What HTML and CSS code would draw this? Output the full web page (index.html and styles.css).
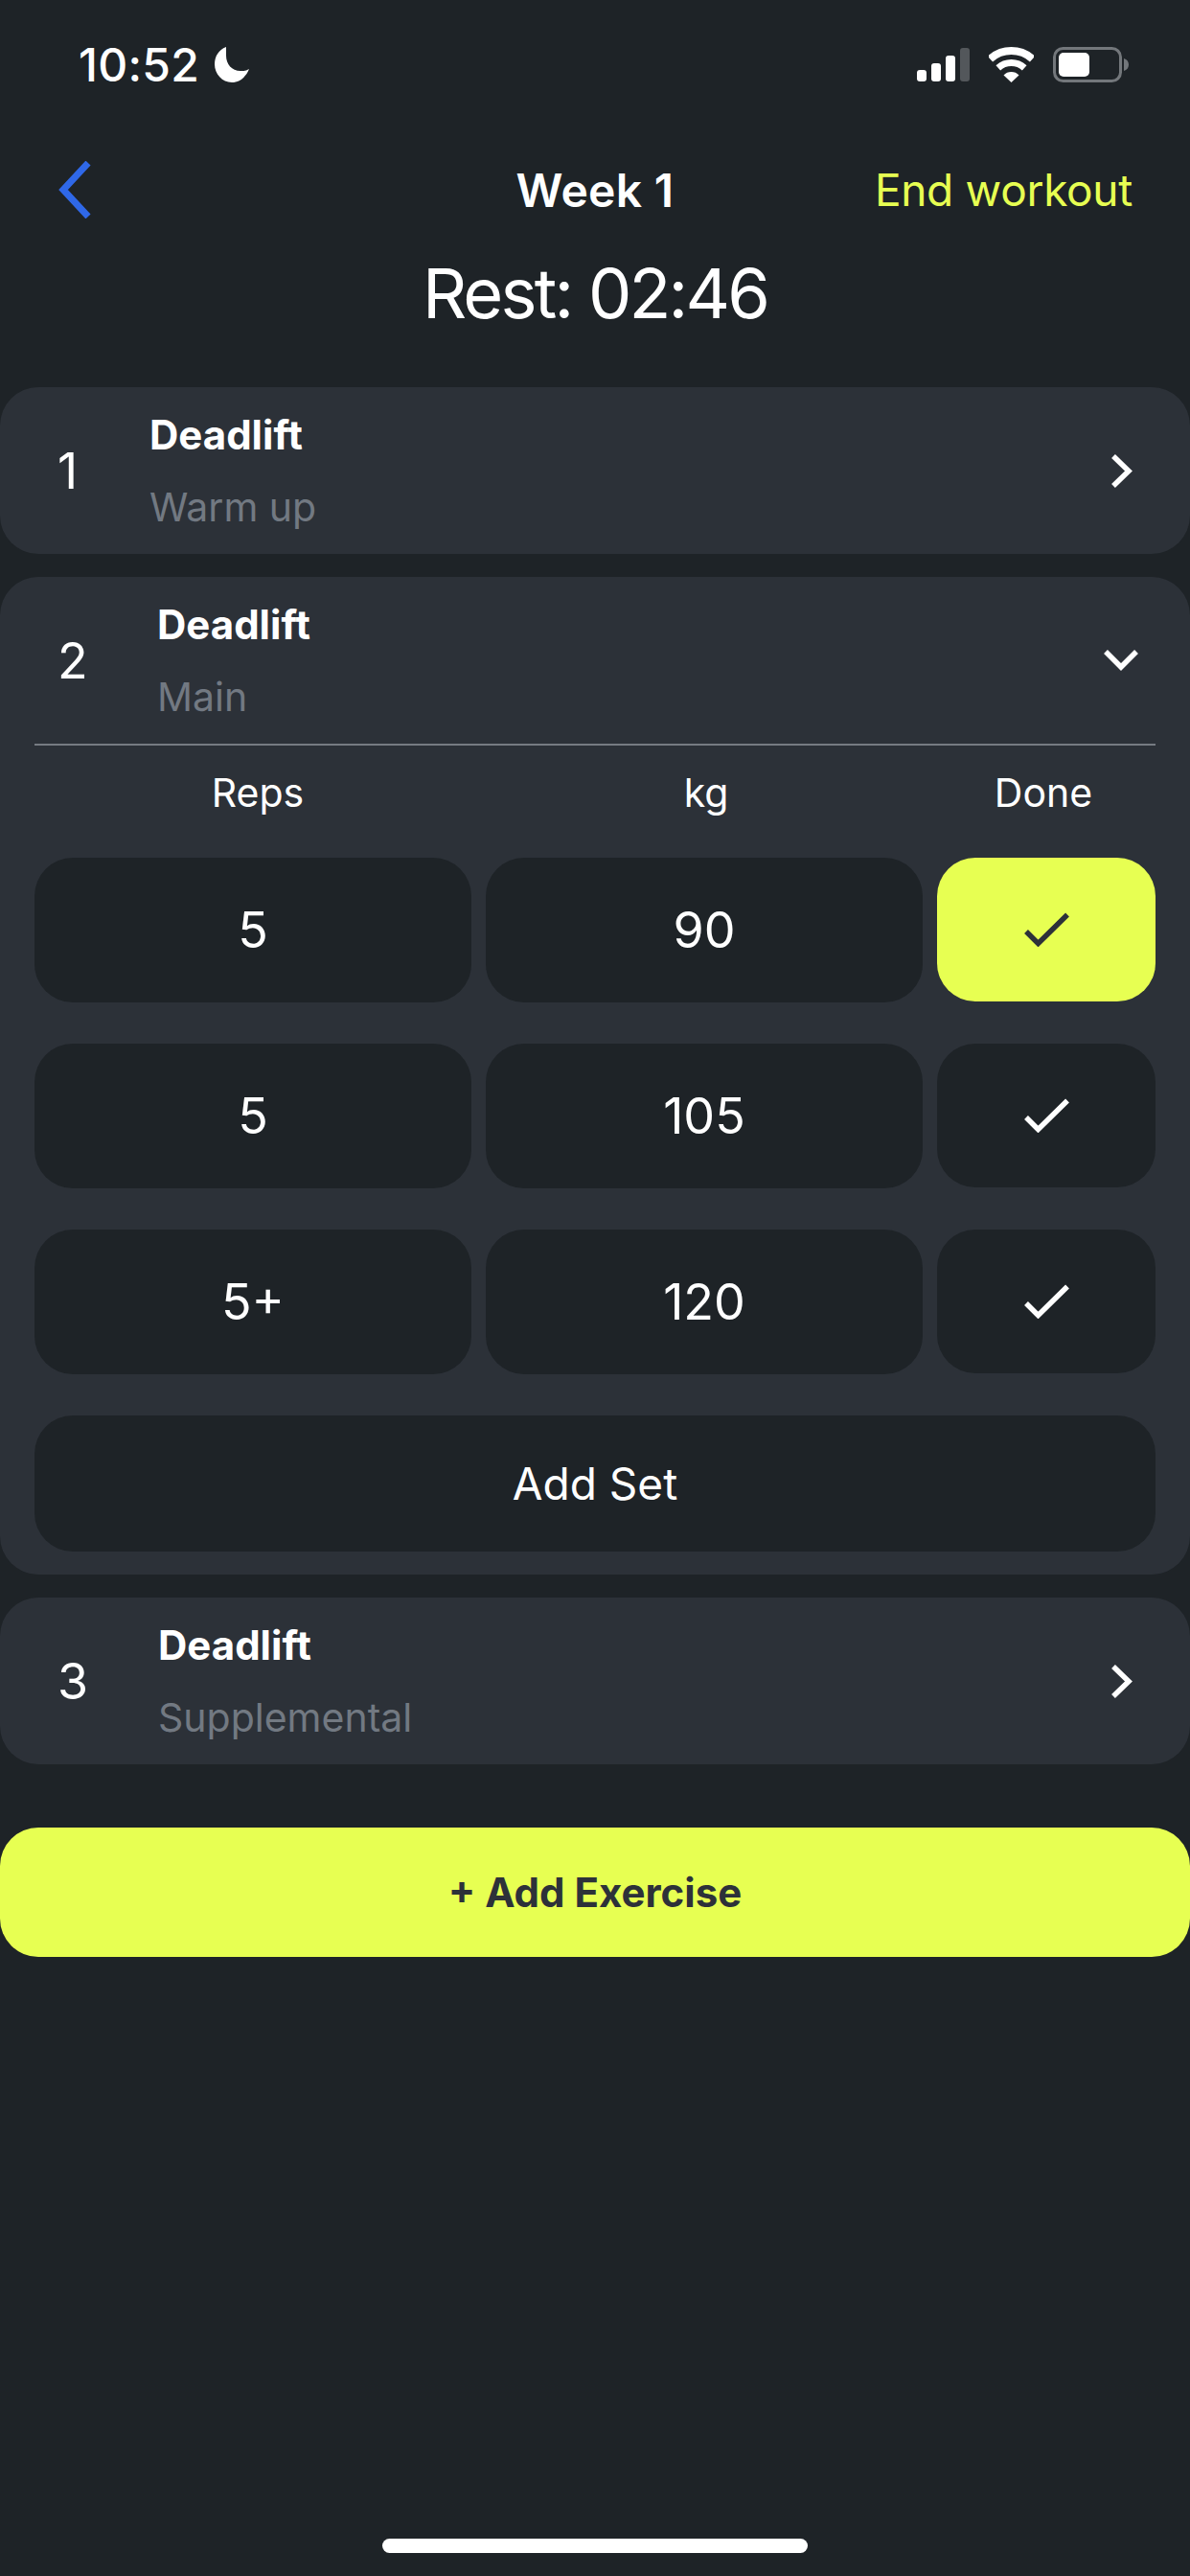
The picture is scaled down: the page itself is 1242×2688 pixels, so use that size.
FILE: index.html
```html
<!DOCTYPE html>
<html lang="en">
<head>
    <meta charset="UTF-8">
    <meta name="viewport" content="width=device-width, initial-scale=1.0">
    <title>Week 1</title>
    <link rel="stylesheet" href="styles.css">
</head>
<body>
    <div class="page">
        <!-- Status bar -->
        <div class="status-bar">
            <div class="status-time">
                <span>10:52</span>
                <svg class="moon" width="36" height="37" viewBox="0 0 36 37"><path d="M12 0C4 3 0 10 0 18c0 10 8 19 18 19 8 0 15-6 18-14-3 2-6 2-9 2-9 0-15-7-15-16 0-3 0-6 0-9z" fill="#fff"/></svg>
            </div>
            <div class="status-icons">
                <svg width="55" height="35" viewBox="0 0 55 35">
                    <rect x="0" y="23" width="10" height="12" rx="3" fill="#fff"/>
                    <rect x="15" y="16" width="10" height="19" rx="3" fill="#fff"/>
                    <rect x="30" y="8" width="10" height="27" rx="3" fill="#fff"/>
                    <rect x="45" y="0" width="10" height="35" rx="3" fill="#53575b"/>
                </svg>
                <svg width="47" height="37" viewBox="0 0 47 37">
                    <path d="M1.400 12.500A33 33 0 0 1 45.600 12.500" fill="none" stroke="#fff" stroke-width="8"/>
                    <path d="M9.800 21.800A20.500 20.500 0 0 1 37.200 21.800" fill="none" stroke="#fff" stroke-width="7"/>
                    <path d="M23.500 37L15.500 29.400A11 11 0 0 1 31.500 29.400z" fill="#fff"/>
                </svg>
                <svg width="79" height="37" viewBox="0 0 79 37">
                    <rect x="1.500" y="1.500" width="69" height="34" rx="9" fill="none" stroke="#73777b" stroke-width="3"/>
                    <rect x="6" y="6" width="32" height="25" rx="5" fill="#fff"/>
                    <path d="M74 12c3 1 5 3 5 6.500s-2 5.500-5 6.500z" fill="#73777b"/>
                </svg>
            </div>
        </div>

        <!-- Header -->
        <div class="nav">
            <svg class="nav-back" width="35" height="60" viewBox="0 0 35 60"><path d="M32 2L6 30l26 28" fill="none" stroke="#2f68e8" stroke-width="7"/></svg>
            <div class="nav-title">Week 1</div>
            <div class="nav-end">End workout</div>
        </div>
        <div class="rest">Rest: 02:46</div>

        <!-- Exercises -->
        <div class="card">
            <div class="card-head first">
                <div class="num">1</div>
                <div class="info">
                    <div class="name">Deadlift</div>
                    <div class="kind">Warm up</div>
                </div>
                <svg class="chev" width="22" height="35" viewBox="0 0 22 35"><path d="M2 2l16 15.500L2 33" fill="none" stroke="#fff" stroke-width="5.500"/></svg>
            </div>
        </div>

        <div class="card">
            <div class="card-head">
                <div class="num">2</div>
                <div class="info">
                    <div class="name">Deadlift</div>
                    <div class="kind">Main</div>
                </div>
                <svg class="chev-down" width="36" height="22" viewBox="0 0 36 22"><path d="M2 2l16 16L34 2" fill="none" stroke="#fff" stroke-width="5.500"/></svg>
            </div>
            <div class="sets">
                <div class="set-labels">
                    <span>Reps</span>
                    <span>kg</span>
                    <span>Done</span>
                </div>
                <div class="set-row">
                    <div class="cell">5</div>
                    <div class="cell">90</div>
                    <div class="check done">
                        <svg width="47" height="36" viewBox="0 0 47 36"><path d="M2 20l12.500 12.500L45 2.500" fill="none" stroke="#2d3139" stroke-width="5.500"/></svg>
                    </div>
                </div>
                <div class="set-row">
                    <div class="cell">5</div>
                    <div class="cell">105</div>
                    <div class="check">
                        <svg width="47" height="36" viewBox="0 0 47 36"><path d="M2 20l12.500 12.500L45 2.500" fill="none" stroke="#fff" stroke-width="5.500"/></svg>
                    </div>
                </div>
                <div class="set-row">
                    <div class="cell">5+</div>
                    <div class="cell">120</div>
                    <div class="check">
                        <svg width="47" height="36" viewBox="0 0 47 36"><path d="M2 20l12.500 12.500L45 2.500" fill="none" stroke="#fff" stroke-width="5.500"/></svg>
                    </div>
                </div>
                <div class="add-set">Add Set</div>
            </div>
        </div>

        <div class="card">
            <div class="card-head third">
                <div class="num">3</div>
                <div class="info">
                    <div class="name">Deadlift</div>
                    <div class="kind">Supplemental</div>
                </div>
                <svg class="chev" width="22" height="35" viewBox="0 0 22 35"><path d="M2 2l16 15.500L2 33" fill="none" stroke="#fff" stroke-width="5.500"/></svg>
            </div>
        </div>

        <div class="add-exercise">+ Add Exercise</div>

        <div class="home-bar"></div>
    </div>
</body>
</html>
```

FILE: styles.css
```css
* {
    box-sizing: border-box;
}

body {
    margin: 0;
    background-color: #1e2327;
    font-family: 'Inter', 'Liberation Sans', sans-serif;
    color: #fff;
}

.page {
    width: 1242px;
    height: 2688px;
    display: flex;
    flex-direction: column;
    overflow: hidden;
}

.status-bar {
    height: 68px;
    margin-top: 33px;
    padding: 0 64px 0 82px;
    display: flex;
    align-items: center;
    justify-content: space-between;
}

.status-time {
    display: flex;
    align-items: center;
    gap: 16px;
    font-size: 48px;
    font-weight: 500;
    letter-spacing: 0.3px;
}

.status-icons {
    display: flex;
    align-items: center;
    gap: 20px;
}

.nav {
    height: 80px;
    margin-top: 57px;
    padding: 0 60px;
    display: flex;
    align-items: center;
    justify-content: space-between;
    position: relative;
}

.nav-title {
    position: absolute;
    left: 0;
    right: 0;
    text-align: center;
    font-size: 48px;
    font-weight: 600;
    letter-spacing: 0.3px;
}

.nav-end {
    font-size: 46px;
    letter-spacing: -0.3px;
    color: #e7ff52;
}

.rest {
    margin-top: 18px;
    height: 100px;
    line-height: 100px;
    text-align: center;
    font-size: 72px;
    letter-spacing: -2.8px;
}

.card {
    margin-top: 24px;
    background-color: #2c3138;
    border-radius: 40px;
}

.rest + .card {
    margin-top: 48px;
}

.card-head {
    height: 174px;
    padding: 0 60px;
    display: flex;
    align-items: center;
}

.num {
    width: 104px;
    font-size: 52px;
}

.first .num {
    width: 96px;
}

.third .num {
    width: 105px;
}

.info {
    flex: 1;
}

.name {
    font-size: 42px;
    font-weight: 700;
    line-height: 60px;
}

.kind {
    margin-top: 16px;
    font-size: 41px;
    line-height: 58px;
    color: #727982;
}

.chev-down {
    margin-right: -6px;
}

.sets {
    margin: 0 36px;
    border-top: 2px solid #767b82;
    padding-bottom: 24px;
}

.set-labels {
    display: grid;
    grid-template-columns: 466px 470px 234px;
    height: 97px;
    margin-bottom: 20px;
    align-items: center;
    text-align: center;
    font-size: 41px;
}

.set-row {
    display: grid;
    grid-template-columns: 456px 456px 228px;
    column-gap: 15px;
    margin-bottom: 43px;
}

.cell {
    height: 151px;
    background-color: #1e2327;
    border-radius: 40px;
    display: flex;
    align-items: center;
    justify-content: center;
    font-size: 52px;
}

.check {
    height: 150px;
    background-color: #1e2327;
    border-radius: 40px;
    display: flex;
    align-items: center;
    justify-content: center;
}

.check.done {
    background-color: #e7ff52;
}

.add-set {
    height: 142px;
    background-color: #1e2327;
    border-radius: 40px;
    display: flex;
    align-items: center;
    justify-content: center;
    font-size: 46px;
}

.add-exercise {
    height: 135px;
    margin-top: 66px;
    background-color: #e7ff52;
    border-radius: 40px;
    display: flex;
    align-items: center;
    justify-content: center;
    font-size: 42px;
    font-weight: 700;
    color: #2d3139;
}

.home-bar {
    width: 444px;
    height: 15px;
    margin: auto auto 24px;
    background-color: #fff;
    border-radius: 8px;
}
```
